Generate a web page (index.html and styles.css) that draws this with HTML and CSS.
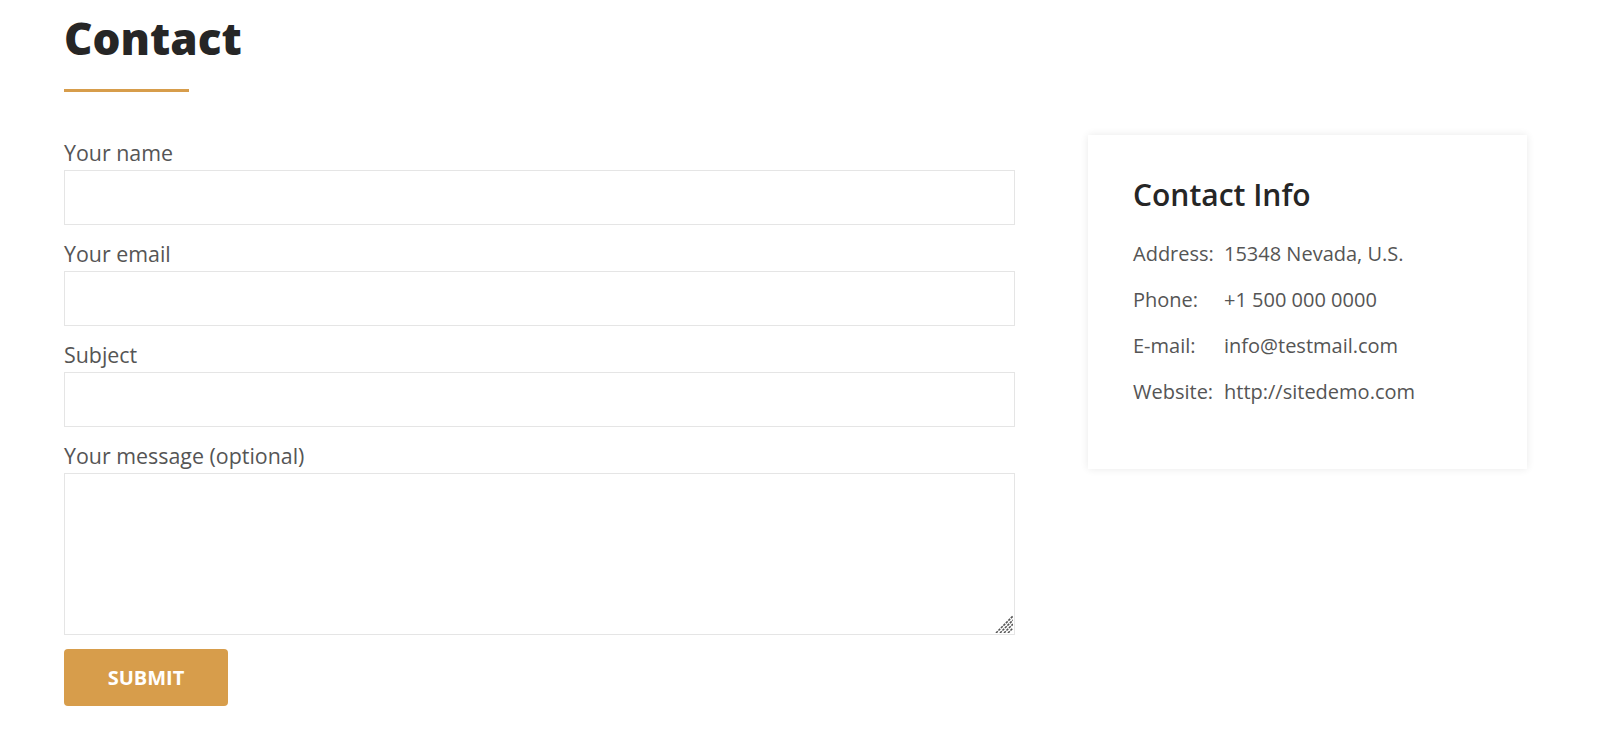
FILE: index.html
```html
<!DOCTYPE html>
<html lang="en">

<head>
  <meta charset="UTF-8">
  <meta name="viewport" content="width=device-width, initial-scale=1.0">
  <title>Contact</title>
  <link rel="stylesheet" href="styles.css">
</head>

<body>
  <main class="page">
    <h1 class="page-title">Contact</h1>
    <div class="title-bar"></div>

    <div class="contact-grid">
      <form class="contact-form" action="#" onsubmit="return false;">
        <label for="name">Your name</label>
        <input type="text" id="name" name="name">

        <label for="email">Your email</label>
        <input type="email" id="email" name="email">

        <label for="subject">Subject</label>
        <input type="text" id="subject" name="subject">

        <label for="message">Your message (optional)</label>
        <div class="message-field">
          <textarea id="message" name="message"></textarea>
          <svg class="grip" width="18" height="18" viewBox="0 0 18 18" aria-hidden="true">
            <path d="M1 18 L18 1 M5 18 L18 5 M9 18 L18 9 M13 18 L18 13" stroke="#555" stroke-width="1.6" stroke-dasharray="2.5 1" fill="none"/>
          </svg>
        </div>

        <button type="submit" class="submit-btn">Submit</button>
      </form>

      <aside class="info-card">
        <h2>Contact Info</h2>
        <dl class="info-list">
          <dt>Address:</dt>
          <dd>15348 Nevada, U.S.</dd>
          <dt>Phone:</dt>
          <dd>+1 500 000 0000</dd>
          <dt>E-mail:</dt>
          <dd>info@testmail.com</dd>
          <dt>Website:</dt>
          <dd>http://sitedemo.com</dd>
        </dl>
      </aside>
    </div>
  </main>
</body>

</html>
```

FILE: styles.css
```css
:root {
  --gold: #d79d4b;
  --text: #555555;
  --heading: #262626;
  --border: #e5e5e5;
}

body {
  margin: 0;
  padding: 0;
  background: #fff;
  color: var(--text);
  font-family: "Open Sans", "Liberation Sans", sans-serif;
}

.page {
  padding: 11px 0 0 64px;
}

.page-title {
  margin: 0;
  font-size: 44px;
  line-height: 54px;
  font-weight: 800;
  color: var(--heading);
}

.title-bar {
  width: 125px;
  height: 3px;
  margin-top: 24px;
  background: var(--gold);
}

.contact-grid {
  display: grid;
  grid-template-columns: 951px 439px;
  column-gap: 73px;
  align-items: start;
  margin-top: 43px;
}

.contact-form {
  padding-top: 3px;
}

.contact-form label {
  display: block;
  font-size: 21.4px;
  line-height: 30px;
  margin-bottom: 2px;
}

.contact-form input,
.contact-form textarea {
  display: block;
  box-sizing: border-box;
  width: 100%;
  height: 55px;
  margin: 0 0 14px;
  padding: 10px 15px;
  border: 1px solid var(--border);
  border-radius: 0;
  font-family: inherit;
  font-size: 16px;
  color: var(--text);
  background: #fff;
}

.message-field {
  position: relative;
}

.contact-form textarea {
  height: 162px;
  resize: none;
}

.grip {
  position: absolute;
  right: 2px;
  bottom: 2px;
}

.submit-btn {
  display: block;
  width: 164px;
  height: 57px;
  border: none;
  border-radius: 4px;
  background: var(--gold);
  color: #fff;
  font-family: inherit;
  font-size: 20px;
  font-weight: 700;
  text-transform: uppercase;
  cursor: pointer;
}

.info-card {
  box-sizing: border-box;
  padding: 42px 45px 62px;
  background: #fff;
  box-shadow: 0 0 8px rgba(0, 0, 0, 0.09);
}

.info-card h2 {
  margin: 0 0 26px;
  font-size: 30px;
  line-height: 36px;
  font-weight: 600;
  color: var(--heading);
}

.info-list {
  display: grid;
  grid-template-columns: 91px auto;
  row-gap: 16px;
  margin: 0;
  font-size: 20px;
  line-height: 30px;
}

.info-list dt,
.info-list dd {
  margin: 0;
}
```
